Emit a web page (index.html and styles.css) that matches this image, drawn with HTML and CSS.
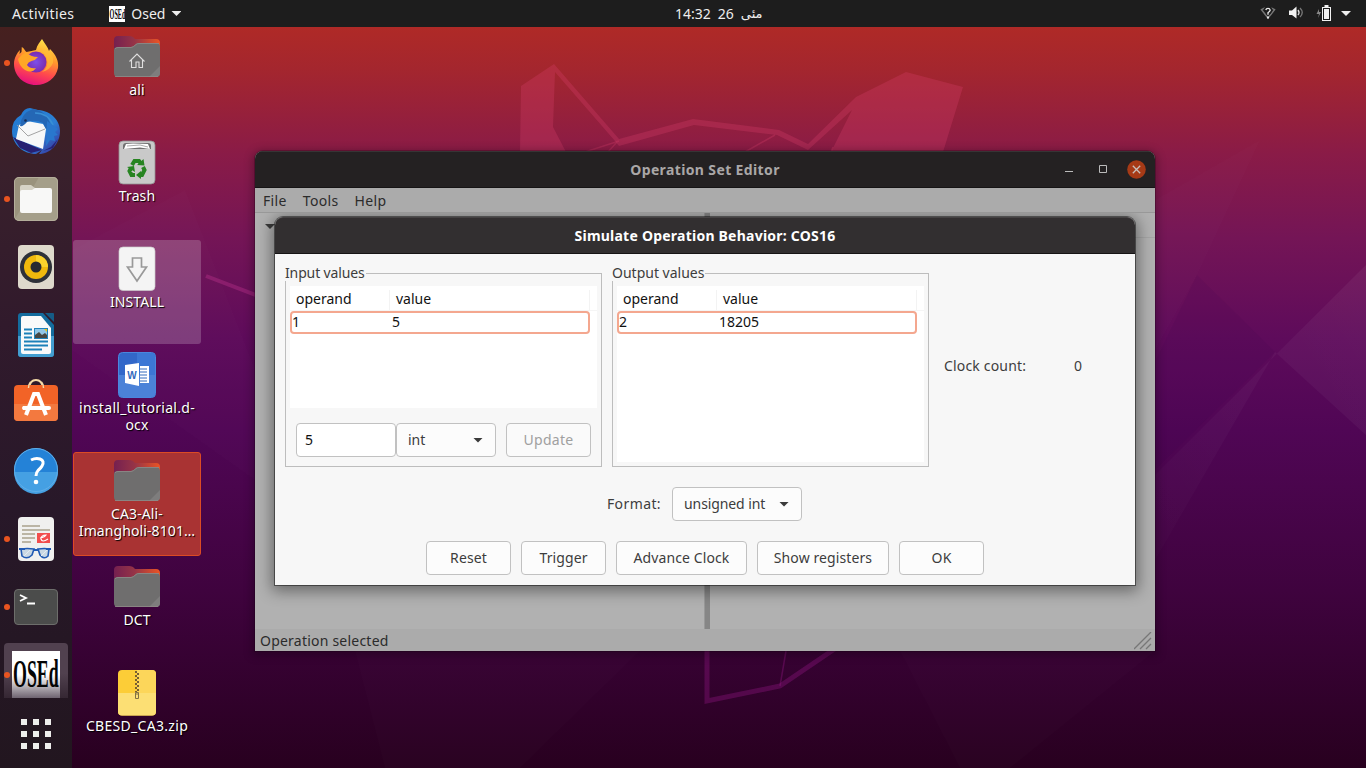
FILE: index.html
```html
<!DOCTYPE html>
<html lang="en">
<head>
<meta charset="utf-8">
<title>Operation Set Editor</title>
<link rel="stylesheet" href="styles.css">
</head>
<body>
<svg class="wallpaper" viewBox="0 0 1366 768" aria-hidden="true">
  <defs>
    <linearGradient id="ray" x1="1" y1="0" x2="0" y2="1"><stop stop-color="#fff" stop-opacity=".05"/><stop offset="1" stop-color="#fff" stop-opacity=".01"/></linearGradient>
  </defs>
  <path d="M1366 265 1155 475V560L1275 352 1366 435z" fill="url(#ray)"/>
  <path d="M1197 275 1275 352 1155 470V362z" fill="#300050" opacity=".08"/>
  <g fill="#fff" opacity=".012">
    <path d="M72 250 185 190 255 370 255 480 72 350z"/><path d="M355 651H640L520 768H385z"/><path d="M900 651H1155L1010 768H960z"/><path d="M1155 200 1260 140 1197 275 1155 350z"/>
  </g>
  <g class="mascot-fill">
    <path d="M554 64 521 86 520 152H566L553 127 555 72 615 141 619 146 694 125 777 135 808 150 852 110 831 152H943L963 87 906 72 856 97 808 144 779 130 693 119 619 139z"/>
  </g>
  <g class="mascot-line">
    <path d="M619 141 585 152M617 142 608 152M775 135 745 152M833 147 831 152" fill="none"/>
  </g>
  <path d="M786 651 780 686" stroke="#a61b95" stroke-width="1.500" opacity=".3"/>
  <path class="mascot-low" d="M707 648V701L780 686 836 648"/>
  <path class="mascot-side" d="M206 276 258 296"/>
</svg>

<div class="screen">
<header class="topbar">
  <div class="top-left"><span class="t-act">Activities</span>
    <svg class="mini" width="16" height="16"><rect width="16" height="16" fill="#fff"/><text transform="translate(.6 12.500) scale(.44 1)" class="osed" font-size="14">OSEd</text></svg>
    <span class="t-osed">Osed</span><i class="caret white"></i></div>
  <div class="clock"><span class="t-time">14:32</span><span class="t-day">26</span><span class="farsi" dir="rtl">مئی</span></div>
  <div class="tray">
    <svg width="16" height="16" fill="none"><path d="M1.5 4.7Q8 .5 14.5 4.7L8 13z" stroke="#777" stroke-width="1.5"/><path d="M5.5 5Q6 3 8 3t2.5 2Q10.500 6.500 8 8v1.500" stroke="#1d1d1d" stroke-width="4"/><path d="M5.800 5Q6.200 3.300 8 3.300T10.200 5.200Q10 6.600 8 7.700v2" stroke="#eee" stroke-width="1.300"/><path d="M8 11.500v2" stroke="#eee" stroke-width="1.800"/></svg>
    <svg width="16" height="16" fill="none"><path d="M1 5.500h3L8.500 1.500v12L4 10H1z" fill="#f2f2f2"/><path d="M10 5q2 2.500 0 5" stroke="#ddd" stroke-width="1.400"/><path d="M12 3q4.500 4.500 0 9" stroke="#777" stroke-width="1.300"/></svg>
    <svg width="16" height="18"><path d="M3 5 .5 10H3l-1 4 3-6H3z" fill="#888"/><path d="M6 3h2.500V1h4v2H15v14H6z" fill="#f2f2f2"/><path d="M7 4h7v12H7z" fill="#1d1d1d"/><path d="M8 5h5v10H8z" fill="#f2f2f2"/></svg>
    <i class="caret white"></i>
  </div>
</header>

<div class="workspace">
<nav class="dock">
  <div class="app run"><svg viewBox="0 0 48 48">
    <defs><linearGradient id="ff" x1=".7" y1="0" x2=".4" y2="1"><stop stop-color="#ffe64a"/><stop offset=".4" stop-color="#ff9a2c"/><stop offset=".7" stop-color="#ff4a4c"/><stop offset="1" stop-color="#e6107e"/></linearGradient><radialGradient id="fp"><stop stop-color="#7c50ea"/><stop offset="1" stop-color="#7b2bae"/></radialGradient></defs>
    <path d="M30 0C33 5 36 8 37 12L38 10C44 16 47 22 46 29C44 39 35 46 24 46C11 46 2 36 2 25C2 19 5 14 8 11L7.500 15 9.500 13 9.800 8C12 9 13 12 14.500 13C18 12 21 12 24 11C25 6 28 3 30 0z" fill="url(#ff)"/>
    <circle cx="24" cy="23" r="10.500" fill="url(#fp)"/>
    <path d="M6 20Q10 15 14.500 13Q18 18 26 18Q24 21 19.500 22Q16 23 15 26Q18 30 24 29Q20 35 13 31Q7 27 6 20z" fill="#ffa626"/><path d="M24 11Q33 12 35 20Q37 28 30 33Q38 31 41 24Q42 17 37 12z" fill="#ffbd36" opacity=".7"/></svg></div>
  <div class="app"><svg viewBox="0 0 48 48">
    <defs><linearGradient id="tb" x1="0" y1="0" x2="1" y2="1"><stop stop-color="#2179d2"/><stop offset=".6" stop-color="#2c80d4"/><stop offset="1" stop-color="#3b2593"/></linearGradient></defs>
    <path d="M18 1 26 3C40 4 48 14 48 24C48 37 38 47 27 47L30 43 24 47C12 47 0 38 0 24Q0 13 9 8Q12 1 18 1z" fill="url(#tb)"/><path d="M1 30 8 41 19 46 30 43zM31 44l10-3 5-9-7 8z" fill="#272072"/>
    <path d="M7 18 15 14 31 17 34 22 31 42 4 32z" fill="#f7f8f8"/><path d="M5 18 16 29 33 22" fill="none" stroke="#9a9a9a" stroke-width=".9"/>
    <path d="M8 19Q9 6 21 2Q35 4 39 19L34 22 31 16Q23 12 15 15Q11 20 8 19z" fill="#2467b5"/><path d="M23 6Q36 6 41 18" fill="none" stroke="#3a8fd4" stroke-width="1.500"/><path d="M35 14 46 22 43 25 46 28 42 29 43 34 38 33 34 39z" fill="#2977cd"/><circle cx="13.500" cy="13.500" r="1.300" fill="#162d55"/></svg></div>
  <div class="app run"><svg viewBox="0 0 48 48"><rect x="2" y="2" width="44" height="44" rx="5" fill="#9a937d"/><path d="M27 2H41Q46 2 46 7V41Q46 46 41 46H7L3 44z" fill="#a59f8a"/><rect x="2.500" y="2.500" width="43" height="43" rx="4.500" fill="none" stroke="#b4ae9b"/><path d="M8 14V12Q8 10 10 10H19L23 13H37V18H8z" fill="#d6d3c6"/><path d="M8 17Q8 15 10 15H20L23 13H38Q40 13 40 15V36Q40 38 38 38H10Q8 38 8 36z" fill="#f8f8f7"/></svg></div>
  <div class="app"><svg viewBox="0 0 48 48"><rect x="6" y="2" width="36" height="44" rx="4" fill="#ded9cc"/><circle cx="24" cy="24" r="16" fill="#2e3139"/><circle cx="24" cy="24" r="12" fill="#f0b90d"/><path d="M24 12A12 12 0 0 1 36 24L24 24z" fill="#fad22c"/><circle cx="24" cy="24" r="5.500" fill="#272a31"/></svg></div>
  <div class="app"><svg viewBox="0 0 48 48"><path d="M9 2H31L42 14V43Q42 46 39 46H9Q6 46 6 43V5Q6 2 9 2z" fill="#146c9e"/><path d="M6 25H42V43Q42 46 39 46H9Q6 46 6 43z" fill="#439ed0"/><path d="M11 5H29L39 17V41Q39 43 37 43H11Q9 43 9 41V7Q9 5 11 5z" fill="#fafafa"/><path d="M33 2H41Q42 2 42 3V11z" fill="#155b86"/><path d="M12 18.500h8M12 22.500h8M12 26.500h8M12 30.500h24M12 34.500h24M12 38.500h18" stroke="#1d81b9" stroke-width="2"/><path d="M22 17h14v11H22z" fill="#2082ba"/><path d="M23 18h12v6H23z" fill="#91c6e7"/><path d="M23 27V24l4-3 3 3 3-2 2 2v3z" fill="#474743"/><path d="M32 18h3v3z" fill="#e8c317"/></svg></div>
  <div class="app"><svg viewBox="0 0 48 48"><path d="M17 9Q18 1 24 1T31 9" fill="none" stroke="#f6dca8" stroke-width="2"/><rect x="2" y="6" width="44" height="36" rx="4" fill="#f26327"/><path d="M2 25H46V38Q46 42 42 42H6Q2 42 2 38z" fill="#f3793f"/><path d="M16.500 9Q16.500 5 18.500 3M31.500 9Q31.500 5 29.500 3" stroke="#f6dca8" stroke-width="1.500" fill="none"/><path d="M14 36 22 15H26L34 36M11 29H37" fill="none" stroke="#fff" stroke-width="4"/><circle cx="12" cy="29" r="2" fill="#fff"/><circle cx="37" cy="29" r="2" fill="#fff"/></svg></div>
  <div class="app help"><svg viewBox="0 0 48 48"><circle cx="24" cy="24" r="22" fill="#2482d7"/><path d="M2 26A22 22 0 0 0 46 26z" fill="#45a0e3"/><circle cx="24" cy="24" r="21.500" fill="none" stroke="#60aee8"/><path d="M19 14Q24 11.500 28 13Q33 15 30 20Q29 22 26 24.500Q24 26.500 24 30" fill="none" stroke="#fff" stroke-width="3"/><circle cx="24" cy="36" r="2.300" fill="#fff"/></svg></div>
  <div class="app run"><svg viewBox="0 0 48 48"><rect x="6" y="2" width="36" height="44" rx="4" fill="#f0f0ef"/><path d="M10 11h18M10 15h28M10 19h13M10 23h13M10 27h9" stroke="#bbb5a5" stroke-width="2"/><path d="M25 18h13v10H25z" fill="#f24d4d"/><path d="M28 23q5-1 6-3-5 0-5 4 1 4 7 0" fill="none" stroke="#fff" stroke-width="1.200"/><path d="M9 34Q15 33 22 34L20 40Q15 45 10 41zM26 34Q33 33 37 34L36 41Q32 45 28 40z" fill="#c9d8e4" stroke="#205ab4" stroke-width="1.600"/><path d="M7 34h6M21 35h6M34 34h5" stroke="#205ab4" stroke-width="2"/><path d="M12 41 18 35M29 41 35 35" stroke="#e5ebf0"/></svg></div>
  <div class="app run"><svg viewBox="0 0 48 48"><rect x="2.500" y="6.500" width="43" height="35" rx="3.500" fill="#4b4c4b" stroke="#6d6e6b"/><path d="M8 12 14 15 8 18M15 20.500h8" fill="none" stroke="#fff" stroke-width="1.800"/></svg></div>
  <div class="app run active"><svg viewBox="0 0 48 48"><defs><linearGradient id="fade" x2="0" y2="1"><stop offset=".5" stop-color="#fff"/><stop offset="1" stop-color="#685d6a"/></linearGradient></defs><rect width="48" height="48" fill="url(#fade)"/><text transform="translate(1 36) scale(.458 1)" class="osed" font-size="39">OSEd</text></svg></div>
  <svg class="grid" width="30" height="30" fill="#eeeeec"><path d="M0 0h6v6H0zM12 0h6v6h-6zM24 0h6v6h-6zM0 12h6v6H0zM12 12h6v6h-6zM24 12h6v6h-6zM0 24h6v6H0zM12 24h6v6h-6zM24 24h6v6h-6z"/></svg>
</nav>

<main class="desktop">
  <svg class="symbols"><defs><linearGradient id="ft" x1="0" x2="1"><stop stop-color="#752050"/><stop offset=".45" stop-color="#963447"/><stop offset="1" stop-color="#eb5424"/></linearGradient>
    <symbol id="folder" viewBox="0 0 48 48"><path d="M1 8Q1 4 5 4H16Q20 4 22 7H43Q47 7 47 11V24H1z" fill="url(#ft)"/><path d="M1 18Q1 15 5 15H18Q20 15 23 12Q24 11 26 11H43Q47 11 47 15V41Q47 45 43 45H5Q1 45 1 41z" fill="#6f6e6e"/><path d="M47 34V41Q47 45 43 45H36z" fill="#7e7d7d"/><path d="M2 17Q3 15.500 5 15.500H18Q20 15.500 23 12.500 24 11.500 26 11.500H46M2 44.500H45" fill="none" stroke="#908b89" stroke-width=".8"/></symbol></defs></svg>
  <div class="item"><svg viewBox="0 0 48 48"><use href="#folder"/><path d="M16.500 29.500 24 22 31.500 29.500M18.500 28V35.500H23V30H26V35.500H29.500V28" fill="none" stroke="#e0dfdf" stroke-width="1.100"/></svg><span class="t-ali">ali</span></div>
  <div class="item"><svg viewBox="0 0 48 48"><rect x="6" y="3" width="36" height="43" rx="4" fill="#c9c9c9" stroke="#929292" stroke-width=".8"/><path d="M10 11V8Q10 5 13 5H35Q38 5 38 8V11z" fill="#707070"/><path d="M11 11 13 6 20 5.500 35 6 37 11 27 9.500z" fill="#fff"/><path d="M14 8 27 7 35 9" stroke="#aaa" fill="none"/><g fill="none" stroke="#278421" stroke-width="4"><path d="M19 27 21.500 23H26L27.500 25M30 29 31.500 32 29 37H27M22 37H18.500L16.500 33 18 30"/></g><path d="M24 27 31.500 27.500 30.500 21zM28 33v8l-5-4zM14 29l7-1 1 6z" fill="#278421"/></svg><span class="t-trash">Trash</span></div>
  <div class="item hover"><svg viewBox="0 0 48 48"><rect x="6" y="3" width="36" height="43.500" rx="4" fill="#f4f4f4" stroke="#cacaca" stroke-width=".7"/><path d="M19.500 14H28.500V23H33.500L24 37 14.500 23H19.500z" fill="none" stroke="#999" stroke-width="1.700"/></svg><span class="t-install">INSTALL</span></div>
  <div class="item"><svg viewBox="0 0 48 48"><rect x="5.500" y="2.500" width="37" height="45" rx="4" fill="#3267c9" stroke="#4a87dd"/><path d="M24 3H39Q42 3 42 6V25H24z" fill="#3c77d5"/><path d="M6 25H42V44Q42 47 39 47H9Q6 47 6 44z" fill="#4b82d8"/><path d="M12 15 26 13V36L12 33z" fill="#fff"/><path d="M27 16h9v17h-9z" fill="#fff"/><path d="M27 19h7M27 22h7M27 25h7M27 28h7M27 31h7" stroke="#336abd"/><text x="14.300" y="28.500" class="word">W</text></svg><span class="t-doc">install_tutorial.d-</span><span class="t-ocx">ocx</span></div>
  <div class="item selected"><svg viewBox="0 0 48 48"><use href="#folder"/></svg><span class="t-ca">CA3-Ali-</span><span class="t-iman">Imangholi-8101…</span></div>
  <div class="item"><svg viewBox="0 0 48 48"><use href="#folder"/></svg><span class="t-dct">DCT</span></div>
  <div class="item"><svg viewBox="0 0 48 48"><rect x="5" y="2" width="38" height="45.500" rx="4" fill="#fccd37"/><path d="M24 2H39Q43 2 43 6V25H24z" fill="#fcd65a"/><path d="M5 25H43V43.500Q43 47.500 39 47.500H9Q5 47.500 5 43.500z" fill="#fcdf74"/><path d="M23 3V24" stroke="#765e32" stroke-width="2" stroke-dasharray="2 2"/><path d="M25 5V24" stroke="#765e32" stroke-width="2" stroke-dasharray="2 2"/><path d="M22.500 24.500h3v6h-3zM24 25v2" fill="none" stroke="#807044"/></svg><span class="t-zip">CBESD_CA3.zip</span></div>
</main>
</div>
</div>

<section class="window">
  <header class="title dim"><span class="t-editor">Operation Set Editor</span>
    <div class="controls"><svg width="10" height="10"><path d="M1 7.500h8" stroke="#bbb"/></svg><svg width="10" height="10"><path d="M1.500 1.500h7v7h-7z" fill="none" stroke="#bbb"/></svg><svg width="19" height="19"><circle cx="9.500" cy="9.500" r="9.300" fill="#a63a16"/><path d="M5.800 5.800 13.200 13.200M13.200 5.800 5.800 13.200" stroke="#c8c0bc" stroke-width="1.300"/></svg></div></header>
  <div class="menu"><span class="t-file">File</span><span class="t-tools">Tools</span><span class="t-help">Help</span></div>
  <div class="panes"><div class="tree"><i class="caret"></i></div><div class="split"></div><div class="props"></div></div>
  <footer class="status"><span class="t-status">Operation selected</span><svg width="18" height="18"><path d="M0 17 17 0M6 17 17 6M12 17 17 12" stroke="#777" stroke-width="1.300"/></svg></footer>
</section>

<section class="dialog">
  <header class="title"><span class="t-sim">Simulate Operation Behavior: COS16</span></header>
  <div class="dialog-body">
    <div class="values">
      <div class="frame"><span class="legend"><span class="t-in">Input values</span></span>
        <div class="list short"><div class="lhead"><span><b class="t-operand">operand</b></span><span><b class="t-value">value</b></span></div><div class="lrow"><span>1</span><span>5</span></div></div>
        <div class="edit"><div class="entry">5</div><div class="combo int"><span class="t-int">int</span><i class="caret"></i></div><div class="button off"><span class="t-update">Update</span></div></div>
      </div>
      <div class="frame"><span class="legend"><span class="t-out">Output values</span></span>
        <div class="list tall"><div class="lhead"><span><b class="t-operand">operand</b></span><span><b class="t-value">value</b></span></div><div class="lrow"><span>2</span><span class="t-num">18205</span></div></div>
      </div>
      <div class="count"><span class="t-clock">Clock count:</span><span>0</span></div>
    </div>
    <div class="format"><span class="t-format">Format:</span><div class="combo uns"><span class="t-uint">unsigned int</span><i class="caret"></i></div></div>
    <div class="actions"><div class="button"><span class="t-reset">Reset</span></div><div class="button"><span class="t-trigger">Trigger</span></div><div class="button wide"><span class="t-adv">Advance Clock</span></div><div class="button wider"><span class="t-show">Show registers</span></div><div class="button"><span class="t-ok">OK</span></div></div>
  </div>
</section>
</body>
</html>
```
FILE: styles.css
```css
* { box-sizing: border-box; }
body { margin: 0; width: 1366px; height: 768px; overflow: hidden; font: 14px/17px "Noto Sans", "DejaVu Sans", sans-serif; color: #3d3d3d; background: linear-gradient(180deg, #b02a26 3%, #a4262e 9%, #8a1b47 20%, #741556 31%, #5e0b5b 44%, #500655 56%, #3f033e 77%, #28001f 100%); }
span { white-space: nowrap; }
.wallpaper { position: absolute; inset: 0; width: 1366px; height: 768px; }
.mascot-fill { fill: #d83f6b; opacity: .3; }
.mascot-line { stroke: #d83f6b; stroke-width: 1.5; opacity: .3; }
.mascot-low { fill: none; stroke: #a61b95; stroke-width: 5; opacity: .3; }
.mascot-side { stroke: #d53d9b; stroke-width: 4; opacity: .3; }
.osed { font-family: "Liberation Serif", serif; font-weight: bold; fill: #050505; }
.word { font: bold 10px "Liberation Sans", sans-serif; fill: #336abd; }
.screen { position: relative; display: flex; flex-direction: column; height: 768px; }
.topbar { height: 27px; flex: none; background: #1d1d1d; display: grid; grid-template-columns: 675px auto 1fr; align-items: center; color: #eee; }
.top-left { display: flex; align-items: center; padding-left: 12px; }
.mini { margin: 0 6px 0 35px; }
.clock { display: flex; gap: 7px; }
.farsi { font: 13px/17px "DejaVu Sans", sans-serif; }
.tray { display: flex; align-items: center; justify-content: flex-end; gap: 12px; padding-right: 15px; }
.tray svg { margin-top: -2px; }
.tray .caret { margin-left: -3px; }
.caret { width: 10px; height: 5px; background: #3b3b3b; clip-path: polygon(0 0, 100% 0, 50% 100%); }
.caret.white { background: #eee; }
.top-left .caret { margin-left: 6px; }
.workspace { display: flex; flex: 1; min-height: 0; }
.dock { width: 72px; background: linear-gradient(#46201f, #39202c 20%, #311a2c 40%, #281829 65%, #22161f); padding-top: 4px; display: flex; flex-direction: column; align-items: center; }
.app { width: 72px; height: 64px; flex: none; margin-bottom: 4px; display: grid; place-items: center; position: relative; }
.app svg { width: 48px; height: 48px; }
.app.help { padding-bottom: 2px; }
.app.run::before { content: ""; position: absolute; left: 4px; top: 29px; width: 6px; height: 6px; border-radius: 50%; background: #e95420; z-index: 1; }
.app.active { width: 64px; height: 55px; overflow: hidden; border-radius: 4px 4px 0 0; background: linear-gradient(#51414f 55%, #352733); align-items: start; padding-top: 8px; }
.app.active::before { left: 0; top: 29px; }
.grid { margin-top: 17px; flex: none; }
.desktop { padding: 1px 0 0 1px; }
.symbols { position: absolute; width: 0; height: 0; }
.item { width: 128px; height: 104px; margin-bottom: 2px; padding-top: 3px; display: flex; flex-direction: column; align-items: center; border: 1px solid transparent; border-radius: 3px; color: #fff; text-shadow: 1px 1px 1px #000; letter-spacing: .1px; }
.item svg { width: 48px; height: 48px; flex: none; margin-bottom: 1px; }
.item svg text { text-shadow: none; letter-spacing: 0; }
.item.hover { background: rgba(255,255,255,.2); }
.item.selected { background: #a93333; border-color: #dc4b24; }
.window { position: absolute; left: 255px; top: 151px; width: 900px; height: 500px; border-radius: 8px 8px 0 0; background: #b1b1b1; overflow: hidden; color: #2b2b2b; display: flex; flex-direction: column; box-shadow: 0 2px 8px 3px rgba(0,0,0,.25), 0 0 0 1px rgba(20,0,15,.25); }
.title { height: 37px; flex: none; background: #322f30; border-bottom: 1px solid #161415; display: flex; align-items: center; justify-content: center; color: #fff; font-weight: bold; position: relative; border-top: 1px solid #454243; }
.title.dim { background: #242122; color: #aaa7a7; border-top-color: #373435; }
.controls { position: absolute; right: 9px; top: 0; height: 34px; display: flex; align-items: center; gap: 24px; }
.controls svg:last-child { margin-left: -5px; }
.menu { height: 25px; flex: none; padding: 0 8px; display: flex; align-items: center; gap: 16px; letter-spacing: .35px; background: #ababab; border-bottom: 1px solid #989898; }
.panes { flex: 1; display: flex; }
.tree { width: 450px; flex: none; padding: 11px 10px; border-right: 1px solid #999; }
.tree .caret { display: block; }
.split { width: 5px; background: #868686; }
.props { flex: 1; }
.props::before { content: ""; display: block; height: 24px; border-bottom: 1px solid #a5a5a5; }
.status { height: 22px; background: #ababab; display: flex; align-items: center; justify-content: space-between; padding: 0 3px 0 5px; }
.status svg { margin-top: 1px; }
.dialog { position: absolute; left: 275px; top: 217px; width: 860px; height: 368px; background: #f7f7f7; border-radius: 8px 8px 0 0; box-shadow: 0 0 0 1px rgba(0,0,0,.45), 0 3px 15px 3px rgba(0,0,0,.42); clip-path: polygon(-20px -4px, 880px -4px, 880px 412px, -20px 412px); }
.dialog .title { border-radius: 8px 8px 0 0; }
.dialog-body { padding: 19px 10px 10px; }
.values { display: flex; gap: 10px; }
.frame { position: relative; width: 317px; height: 194px; border: 1px solid #bdbdbd; padding: 12px 4px 0; }
.legend { position: absolute; left: -1px; top: -10px; background: #f7f7f7; padding-right: 1px; height: 17px; }
.list { width: 307px; background: #fff; color: #111; }
.short { height: 122px; }
.tall { height: 176px; }
.lhead { height: 25px; display: flex; border-bottom: 1px solid #f5f5f5; padding-top: 4px; }
.lhead span { width: 100px; padding-left: 6px; border-right: 1px solid #f3f3f3; }
.lhead span + span { width: 200px; }
.lhead b { font-weight: normal; }
.lrow { width: 300px; height: 23px; border: 2px solid #f4a78f; border-radius: 4px; display: flex; align-items: center; padding-bottom: 2px; }
.lrow span { width: 100px; }
.edit { display: flex; margin: 15px 0 0 6px; }
.entry, .combo, .button { height: 34px; border: 1px solid #c1c1c1; border-radius: 4px; background: #fcfcfc; display: flex; align-items: center; }
.entry, .button, .combo span { padding-bottom: 2px; }
.entry { width: 100px; background: #fff; color: #111; padding-left: 8px; }
.combo { justify-content: space-between; padding: 0 12px 0 11px; }
.int { width: 100px; }
.uns { width: 130px; }
.button { width: 85px; justify-content: center; letter-spacing: .1px; }
.edit .button { margin-left: 10px; }
.off { color: #a0a0a0; background: #fafafa; }
.wide { width: 131px; }
.wider { width: 132px; }
.count { display: flex; padding: 84px 0 0 5px; }
.count > span:last-child { margin-left: 48px; }
.format { display: flex; align-items: center; justify-content: center; margin: 20px 1px 0 0; gap: 11px; height: 34px; }
.format > span { padding-bottom: 2px; }
.actions { display: flex; gap: 10px; justify-content: center; margin-top: 20px; }
.t-act { letter-spacing: .4px; }
.t-editor { letter-spacing: .37px; }
.t-sim { letter-spacing: .23px; }
.t-in { letter-spacing: -.13px; }
.t-status { letter-spacing: .22px; }
.t-clock { letter-spacing: .17px; }
.t-format { letter-spacing: .4px; }
.t-uint { letter-spacing: -.1px; }
.t-doc, .t-zip { letter-spacing: .3px; }
.t-update { letter-spacing: .25px; }
```
